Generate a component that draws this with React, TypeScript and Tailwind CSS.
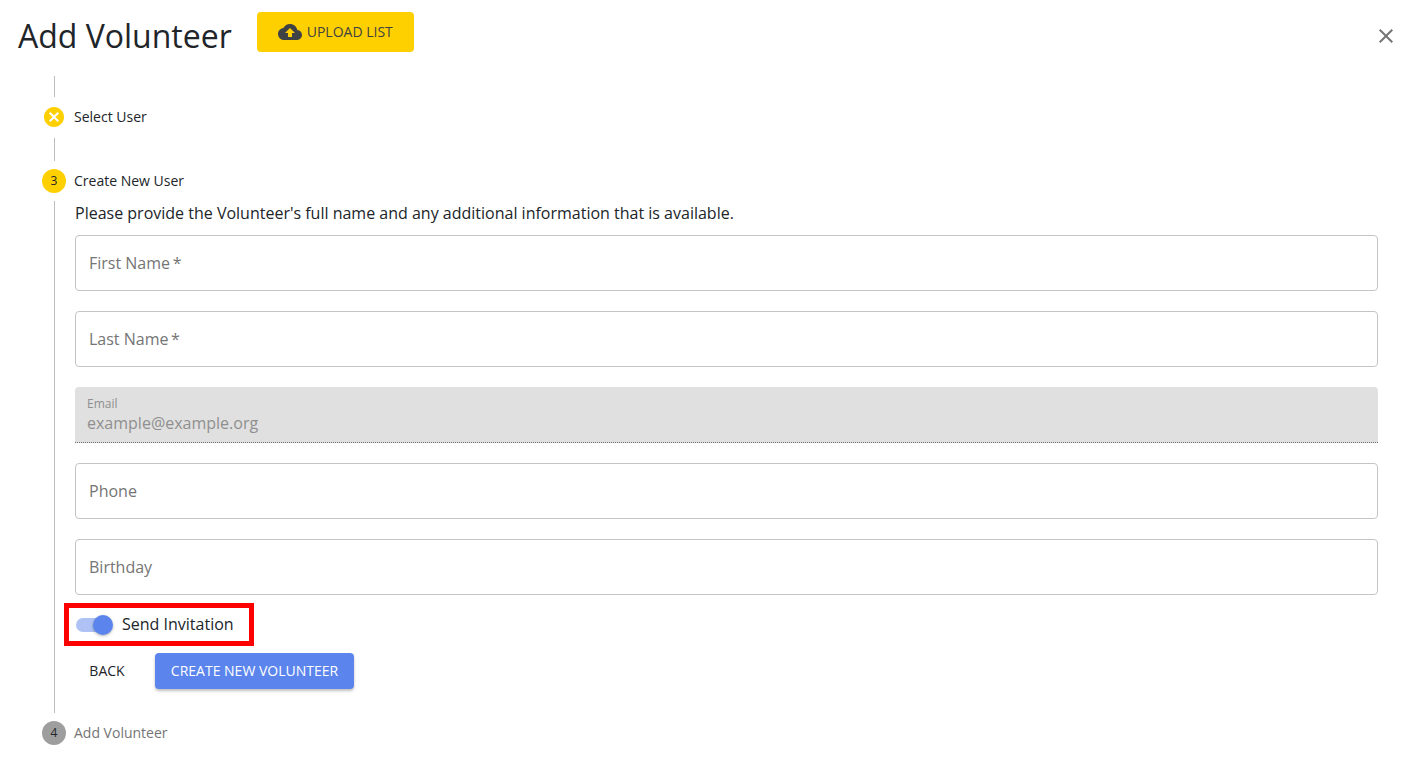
import React from "react";

const CloudUp = () => (
  <svg viewBox="0 0 24 24" className="w-6 h-6 fill-[#3f4244]">
    <path d="M19.35 10.04C18.67 6.59 15.64 4 12 4 9.11 4 6.6 5.64 5.35 8.04 2.34 8.36 0 10.91 0 14c0 3.31 2.69 6 6 6h13c2.76 0 5-2.24 5-5 0-2.64-2.05-4.78-4.65-4.96zM14 13v4h-4v-4H7l5-5 5 5h-3z" />
  </svg>
);
const Close = () => (
  <svg viewBox="0 0 24 24" className="w-6 h-6 fill-[#757575]">
    <path d="M19 6.41L17.59 5 12 10.59 6.41 5 5 6.41 10.59 12 5 17.59 6.41 19 12 13.41 17.59 19 19 17.59 13.41 12z" />
  </svg>
);
const Cancel = () => (
  <svg viewBox="0 0 24 24" className="w-6 h-6 fill-[#ffd000]">
    <path d="M12 2C6.47 2 2 6.47 2 12s4.47 10 10 10 10-4.47 10-10S17.53 2 12 2zm5 13.59L15.59 17 12 13.41 8.41 17 7 15.59 10.59 12 7 8.41 8.41 7 12 10.59 15.59 7 17 8.41 13.41 12 17 15.59z" />
  </svg>
);

const Field = ({ label }: { label: string }) => (
  <div className="h-14 border border-[#c4c4c4] rounded flex items-center px-[13px] text-base text-[#757575] bg-white">
    {label}
  </div>
);

const Connector = ({ h }: { h: string }) => <div className={`ml-[54px] w-px bg-[#bdbdbd] ${h}`} />;

export default function App() {
  return (
    <div className="w-[1425px] h-[765px] overflow-hidden bg-white text-[#212529] font-['Open_Sans',sans-serif]">
      <header className="h-[76px] flex items-start pl-[18px] pr-[27px]">
        <h1 className="mt-[12px] text-[32px] leading-[48px] font-normal text-[#212529]">Add Volunteer</h1>
        <button className="mt-3 ml-[25px] w-[157px] h-10 bg-[#ffd000] rounded flex items-center justify-center gap-[5px] text-sm text-[#3f4244]">
          <CloudUp />
          <span>UPLOAD LIST</span>
        </button>
        <button className="ml-auto mt-6">
          <Close />
        </button>
      </header>

      <Connector h="h-[21px]" />
      <div className="mt-2 mb-[9px] h-6 pl-[42px] flex items-center gap-2 text-sm">
        <Cancel />
        <span>Select User</span>
      </div>
      <Connector h="h-[23px]" />
      <div className="mt-2 mb-2 h-6 pl-[42px] flex items-center gap-2 text-sm">
        <span className="w-6 h-6 rounded-full bg-[#ffd000] flex items-center justify-center text-xs">3</span>
        <span>Create New User</span>
      </div>

      <div className="ml-[54px] mr-[47px] h-[512px] border-l border-[#bdbdbd] pl-5">
        <p className="h-6 mb-[10px] text-base leading-6">
          Please provide the Volunteer's full name and any additional information that is available.
        </p>
        <div className="flex flex-col gap-5">
          <Field label={"First Name\u2009*"} />
          <Field label={"Last Name\u2009*"} />
          <div className="h-14 bg-[#e0e0e0] rounded-t border-b border-dotted border-[#6f6f6f] px-3 pt-[9px] text-[#8f8f8f]">
            <div className="text-xs leading-[15px]">Email</div>
            <div className="text-base leading-6">example@example.org</div>
          </div>
          <Field label="Phone" />
          <Field label="Birthday" />
        </div>
        <div className="mt-2 -ml-[11px] w-[190px] h-[43px] border-[5px] border-[#ff0000] flex items-center pl-[7px]">
          <div className="relative w-[34px] h-[14px] rounded-full bg-[#aec2f5]">
            <div className="absolute left-[17px] -top-[3px] w-5 h-5 rounded-full bg-[#5b85ec] shadow-[0_1px_3px_rgba(0,0,0,0.3)]" />
          </div>
          <span className="ml-3 text-base leading-6 -mt-0.5">Send Invitation</span>
        </div>
        <div className="mt-[7px] flex items-start">
          <button className="w-[66px] h-9 text-sm text-[#212529] -ml-px">BACK</button>
          <button className="ml-[15px] w-[199px] h-9 rounded bg-[#5b85ec] text-white text-sm shadow-[0_2px_3px_rgba(0,0,0,0.25)]">
            CREATE NEW VOLUNTEER
          </button>
        </div>
      </div>

      <div className="mt-2 h-6 pl-[42px] flex items-center gap-2 text-sm text-[#757575]">
        <span className="w-6 h-6 rounded-full bg-[#9e9e9e] text-[#212529] flex items-center justify-center text-xs">4</span>
        <span>Add Volunteer</span>
      </div>
    </div>
  );
}
